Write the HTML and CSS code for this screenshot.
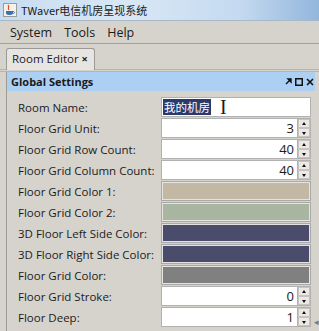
FILE: index.html
```html
<!DOCTYPE html>
<html lang="zh">
<head>
    <meta charset="UTF-8">
    <title>TWaver电信机房呈现系统</title>
    <link rel="stylesheet" href="styles.css">
</head>
<body>

    <div class="window">
        <div class="titlebar">
            <svg class="app-icon" width="14" height="14" viewBox="0 0 14 14">
                <rect x="0.5" y="0.5" width="13" height="13" fill="#f4f1ea" stroke="#9a9a9a"/>
                <path d="M5 2 C7 4 4 5 6 7" stroke="#e0482a" stroke-width="1.2" fill="none"/>
                <path d="M3 8 H10 V10 C10 11 9 12 6.5 12 C4 12 3 11 3 10 Z" fill="#3a6fb0"/>
                <path d="M10 8.5 C12 8.5 12 10.5 10 10.5" stroke="#3a6fb0" fill="none"/>
            </svg>
            <span class="title-text">TWaver电信机房呈现系统</span>
        </div>

        <div class="menubar">
            <span class="menu">System</span>
            <span class="menu">Tools</span>
            <span class="menu">Help</span>
        </div>

        <div class="tabstrip">
            <div class="tab">Room Editor <span class="tab-close">×</span></div>
        </div>

        <div class="panel">
            <div class="panel-head">
                <span class="panel-title">Global Settings</span>
                <span class="panel-icons">
                    <svg width="7" height="7" viewBox="0 0 7 7"><path d="M1 6 L4 3 M3 1 H6 V4 Z" stroke="#111" stroke-width="1.4" fill="#111"/></svg>
                    <svg width="8" height="8" viewBox="0 0 8 8"><rect x="0.75" y="0.75" width="6.5" height="6.5" stroke="#111" stroke-width="1.5" fill="none"/></svg>
                    <svg width="8" height="8" viewBox="0 0 8 8"><path d="M1 1 L7 7 M7 1 L1 7" stroke="#111" stroke-width="1.6"/></svg>
                </span>
            </div>

            <div class="props">
                <label class="prop-label">Room Name:</label>
                <div class="field text-field">
                    <span class="selected">我的机房</span>
                    <span class="ibeam">I</span>
                </div>

                <label class="prop-label">Floor Grid Unit:</label>
                <div class="spinner"><span class="field num">3</span><span class="spin"><i class="up"></i><i class="down"></i></span></div>

                <label class="prop-label">Floor Grid Row Count:</label>
                <div class="spinner"><span class="field num">40</span><span class="spin"><i class="up"></i><i class="down"></i></span></div>

                <label class="prop-label">Floor Grid Column Count:</label>
                <div class="spinner"><span class="field num">40</span><span class="spin"><i class="up"></i><i class="down"></i></span></div>

                <label class="prop-label">Floor Grid Color 1:</label>
                <div class="swatch"><span style="background: #c3b8a3"></span></div>

                <label class="prop-label">Floor Grid Color 2:</label>
                <div class="swatch"><span style="background: #a8b5a0"></span></div>

                <label class="prop-label">3D Floor Left Side Color:</label>
                <div class="swatch"><span style="background: #4b4b6b"></span></div>

                <label class="prop-label">3D Floor Right Side Color:</label>
                <div class="swatch"><span style="background: #4b4b6b"></span></div>

                <label class="prop-label">Floor Grid Color:</label>
                <div class="swatch"><span style="background: #808080"></span></div>

                <label class="prop-label">Floor Grid Stroke:</label>
                <div class="spinner"><span class="field num">0</span><span class="spin"><i class="up"></i><i class="down"></i></span></div>

                <label class="prop-label">Floor Deep:</label>
                <div class="spinner"><span class="field num">1</span><span class="spin"><i class="up"></i><i class="down"></i></span></div>
            </div>
            <span class="corner-arrow">◂</span>
        </div>
    </div>

</body>
</html>
```

FILE: styles.css
```css
* {
    margin: 0;
    padding: 0;
    box-sizing: border-box;
}

body {
    width: 319px;
    height: 331px;
    overflow: hidden;
    background: #d6d3cd;
    font-family: 'Open Sans', 'Noto Sans CJK SC', sans-serif;
    color: #1b1b1b;
}

.window {
    display: flex;
    flex-direction: column;
    height: 331px;
}

.titlebar {
    height: 21px;
    display: flex;
    align-items: center;
    padding-left: 3px;
    gap: 4px;
    background: linear-gradient(90deg, #c8dcf0 0%, #d9e7f5 40%, #c4daf0 75%, #93b6dc 100%);
    border-bottom: 1px solid #a9b8c8;
}

.title-text {
    font-size: 11px;
    font-family: 'Noto Sans CJK SC', sans-serif;
    color: #1a1a1a;
}

.menubar {
    height: 23px;
    display: flex;
    align-items: center;
    padding-left: 10px;
    gap: 12px;
    border-bottom: 1px solid #a19f9a;
}

.menu {
    font-size: 12.5px;
}

.tabstrip {
    height: 28px;
    padding: 4px 0 0 6px;
    border-bottom: 3px double #b7b4ae;
}

.tab {
    width: 89px;
    height: 22px;
    padding: 2px 0 0 5px;
    font-size: 11.5px;
    background: #e7e5e1;
    border: 1px solid #9c9a96;
    border-bottom: none;
    border-radius: 3px 3px 0 0;
}

.tab-close {
    font-size: 11px;
    font-weight: bold;
}

.panel {
    flex: 1;
    margin-left: 6px;
    margin-right: 4px;
    border-left: 1px solid #9e9c98;
    position: relative;
}

.panel-head {
    height: 19px;
    display: flex;
    align-items: center;
    justify-content: space-between;
    padding: 0 1px 0 4px;
    background: #acd0f3;
}

.panel-title {
    font-size: 11px;
    font-weight: bold;
}

.panel-icons {
    display: flex;
    align-items: center;
    gap: 3px;
}

.props {
    display: grid;
    grid-template-columns: 154px 150px;
    grid-auto-rows: 20px;
    row-gap: 1px;
    padding-top: 6px;
}

.prop-label {
    font-size: 11.5px;
    padding-left: 11px;
    display: flex;
    align-items: center;
}

.field {
    background: #fff;
    border: 1px solid #b1b1b1;
    font-size: 13px;
}

.text-field {
    display: flex;
    align-items: center;
    padding-left: 1px;
}

.selected {
    background: #2b3a6b;
    color: #fff;
    font-size: 11.5px;
    font-family: 'Noto Sans CJK SC', sans-serif;
    line-height: 16px;
    padding: 0 1px;
}

.ibeam {
    margin-left: 9px;
    font-family: 'Liberation Serif', serif;
    font-size: 20px;
    line-height: 18px;
}

.spinner {
    display: flex;
}

.num {
    flex: 1;
    text-align: right;
    padding-right: 3px;
    line-height: 18px;
}

.spin {
    width: 13px;
    display: flex;
    flex-direction: column;
    border: 1px solid #b1b1b1;
    border-left: none;
}

.spin i {
    flex: 1;
    background: #ece9e4;
    border: 1px solid #c6c4c0;
    position: relative;
}

.spin i::after {
    content: '';
    position: absolute;
    left: 3px;
    border-left: 2.5px solid transparent;
    border-right: 2.5px solid transparent;
}

.spin .up::after {
    top: 2px;
    border-bottom: 3px solid #111;
}

.spin .down::after {
    top: 3px;
    border-top: 3px solid #111;
}

.swatch {
    border: 1px solid #a9a9a9;
    padding: 1px;
    background: #e6e4e0;
}

.swatch span {
    display: block;
    height: 100%;
}

.corner-arrow {
    position: absolute;
    right: -4px;
    bottom: 3px;
    font-size: 9px;
    color: #777;
}
```
